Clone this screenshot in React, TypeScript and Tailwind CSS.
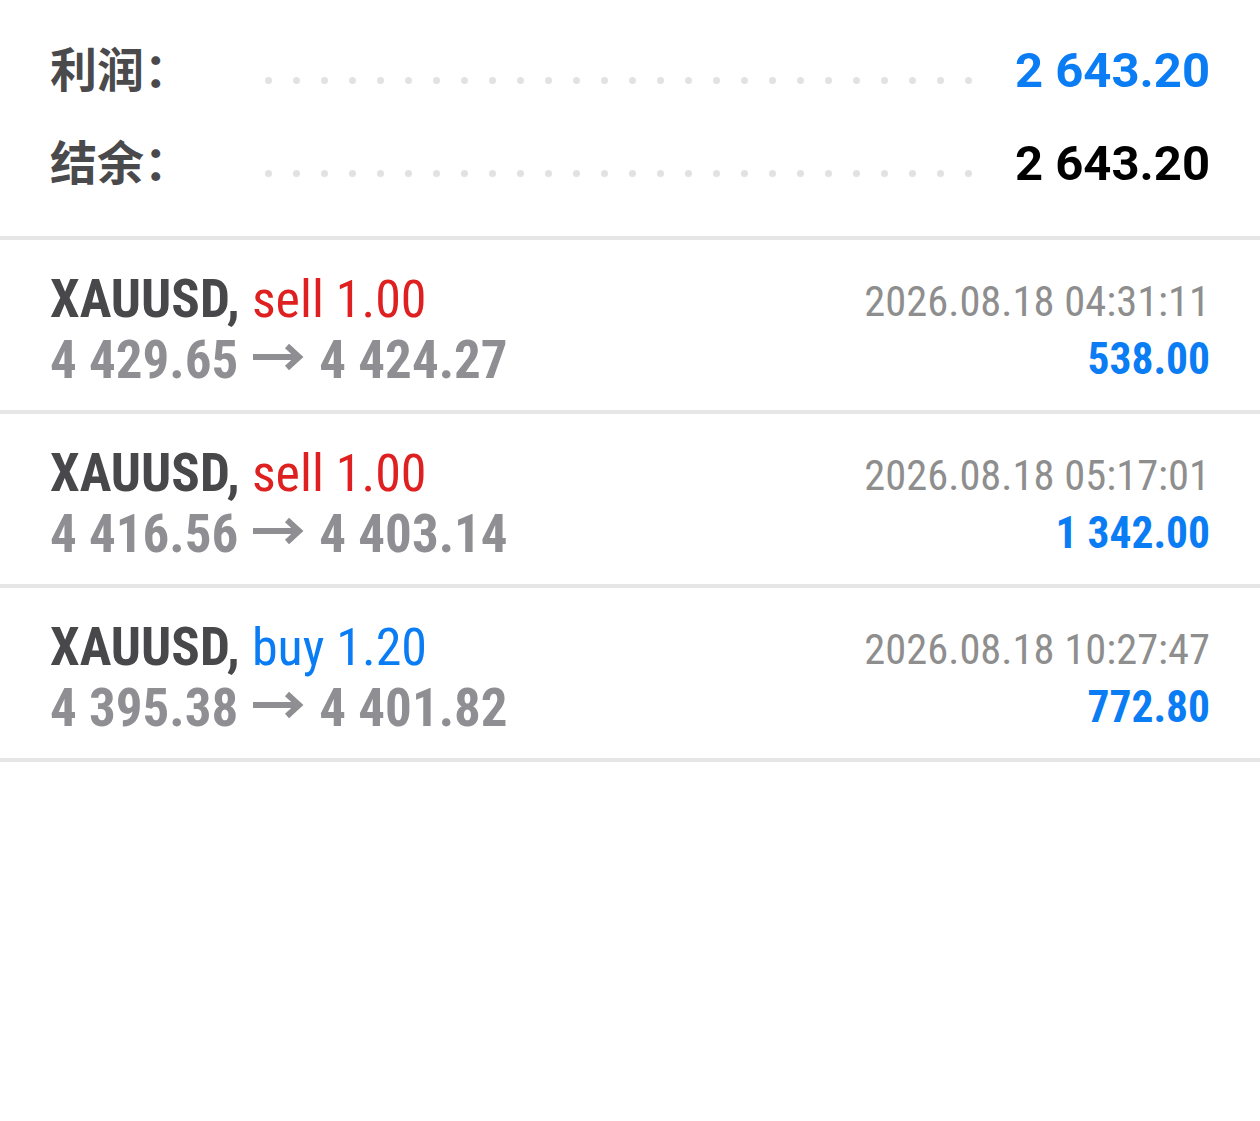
const trades = [
  { side: "sell", vol: "1.00", open: "4 429.65", close: "4 424.27", time: "2026.08.18 04:31:11", profit: "538.00" },
  { side: "sell", vol: "1.00", open: "4 416.56", close: "4 403.14", time: "2026.08.18 05:17:01", profit: "1 342.00" },
  { side: "buy", vol: "1.20", open: "4 395.38", close: "4 401.82", time: "2026.08.18 10:27:47", profit: "772.80" },
];

function Dots() {
  return (
    <div className="w-[707px] flex justify-between items-center mt-[19px]">
      {Array.from({ length: 26 }).map((_, i) => (
        <span key={i} className="block w-[7px] h-[7px] rounded-full bg-[#e2e2e2]" />
      ))}
    </div>
  );
}

function Arrow() {
  return (
    <svg width="52" height="28" viewBox="0 0 52 28" className="ml-[14px] mr-[15px] mb-[6px] shrink-0">
      <line x1="1" y1="14" x2="47" y2="14" stroke="#8e8e93" strokeWidth="6" />
      <polyline points="35,3 47,14 35,25" fill="none" stroke="#8e8e93" strokeWidth="6" />
    </svg>
  );
}

function SummaryRow({ label, value, color }: { label: string; value: string; color: string }) {
  return (
    <div className="flex items-center h-[93px]">
      <div className="w-[215px] mb-[9px] text-[47px] font-bold text-[#4a4a4d] font-['Noto_Sans_CJK_SC',sans-serif] leading-none whitespace-nowrap">
        {label}：
      </div>
      <Dots />
      <div className={`ml-auto text-[49px] font-bold font-['Roboto',sans-serif] leading-none ${color}`}>{value}</div>
    </div>
  );
}

export default function App() {
  return (
    <div className="min-h-[1121px] bg-white font-['Roboto_Condensed','Roboto',sans-serif]">
      <div className="pt-[24px] pb-[26px] px-[50px]">
        <SummaryRow label="利润" value="2 643.20" color="text-[#0a7cf4]" />
        <SummaryRow label="结余" value="2 643.20" color="text-black" />
      </div>
      <div className="h-[4px] bg-[#e6e6e6]" />
      {trades.map((t, i) => (
        <div key={i}>
          <div className="flex justify-between px-[50px] pt-[29px] pb-[20px]">
            <div className="flex flex-col">
              <div className="text-[53px] leading-[60px] whitespace-nowrap">
                <span className="font-bold text-[#48484a]">XAUUSD,</span>{" "}
                <span className={`text-[52px] ${t.side === "sell" ? "text-[#de2020]" : "text-[#0a7cf4]"}`}>
                  {t.side} {t.vol}
                </span>
              </div>
              <div className="flex items-center text-[53px] leading-[60px] font-bold text-[#8e8e93] whitespace-nowrap">
                <span>{t.open}</span>
                <Arrow />
                <span>{t.close}</span>
              </div>
            </div>
            <div className="flex flex-col items-end pt-[4px]">
              <div className="text-[42.5px] leading-[58px] text-[#8e8e8e] whitespace-nowrap">{t.time}</div>
              <div className="text-[43.5px] leading-[58px] font-bold text-[#0a7cf4] whitespace-nowrap">{t.profit}</div>
            </div>
          </div>
          <div className="h-[4px] bg-[#e6e6e6]" />
        </div>
      ))}
    </div>
  );
}
